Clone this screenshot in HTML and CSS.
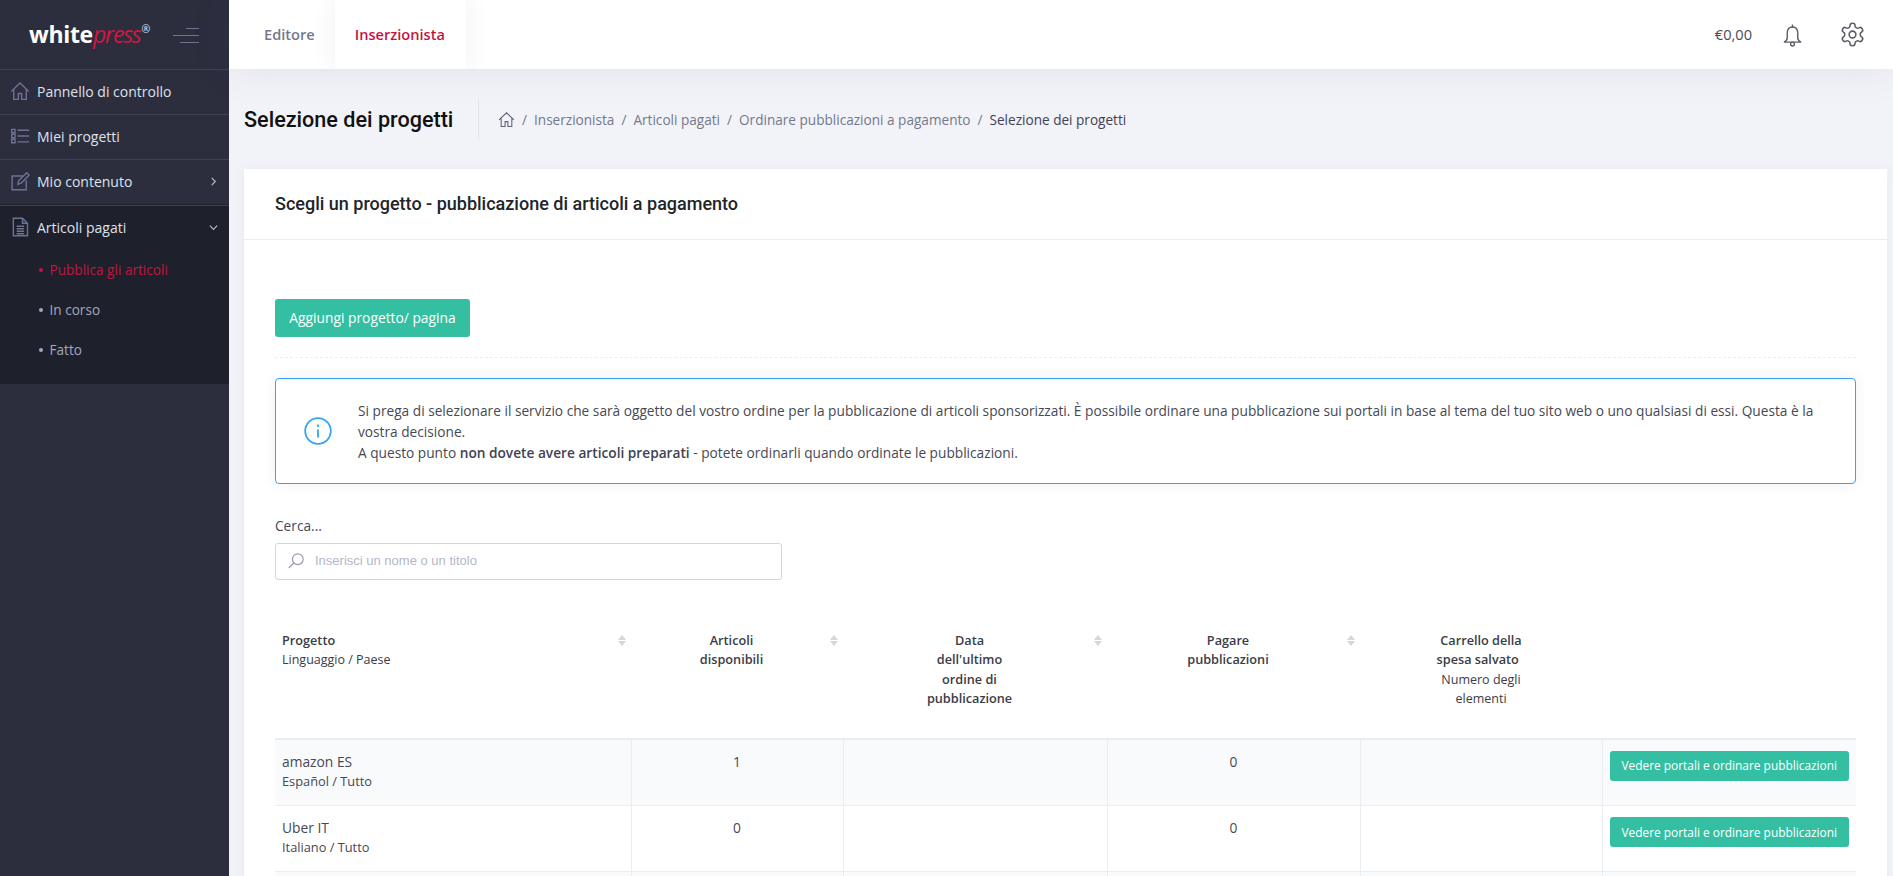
FILE: index.html
```html
<!DOCTYPE html>
<html lang="it">
<head>
<meta charset="utf-8">
<title>Selezione dei progetti</title>
<link rel="stylesheet" href="styles.css">
</head>
<body>
<div class="app">
  <aside class="sidebar">
    <div class="brand">
      <div class="logo"><span class="logo-white">white</span><span class="logo-press">press</span><span class="logo-reg">®</span></div>
      <div class="toggler"><i class="t1"></i><i class="t2"></i><i class="t3"></i></div>
    </div>
    <nav class="menu">
      <a class="item">
        <svg class="mi" viewBox="0 0 24 24"><path d="M1.500 12.500 12 2.500l10.500 10M4.500 10.500V22h5.500v-7h4v7h5.500V10.500"/></svg>
        <span class="label">Pannello di controllo</span>
      </a>
      <a class="item">
        <svg class="mi" viewBox="0 0 24 24"><path d="M2 4h4v4H2zM2 10h4v4H2zM2 16h4v4H2zM9 5h14M9 12h14M9 19h14"/></svg>
        <span class="label">Miei progetti</span>
      </a>
      <a class="item">
        <svg class="mi" viewBox="0 0 24 24"><path d="M15 6H2.500v16.500h17V11M9.500 16l1-4.500L20 2l3 3-9.500 9.500z"/></svg>
        <span class="label">Mio contenuto</span>
        <svg class="chev" viewBox="0 0 10 10"><path d="M3 1l4 4-4 4"/></svg>
      </a>
      <div class="group">
        <a class="item item-open">
          <svg class="mi" viewBox="0 0 24 24"><path d="M4 1.500h11l6 6v15H4zM15 1.500v6h6M8 11h9M8 14h9M8 17h9M8 20h9"/></svg>
          <span class="label">Articoli pagati</span>
          <svg class="chev" viewBox="0 0 10 10"><path d="M1 3l4 4 4-4"/></svg>
        </a>
        <a class="sub sub-active"><span class="dot"></span>Pubblica gli articoli</a>
        <a class="sub"><span class="dot"></span>In corso</a>
        <a class="sub"><span class="dot"></span>Fatto</a>
      </div>
    </nav>
  </aside>

  <div class="main">
    <header class="topbar">
      <nav class="tabs">
        <a class="tab">Editore</a>
        <a class="tab tab-active">Inserzionista</a>
      </nav>
      <div class="tools">
        <span class="balance">€0,00</span>
        <svg class="bell" viewBox="0 0 20 24"><path d="M10 1v2.500M10 3.500c-3.800 0-5.500 3-5.500 6.500v5c0 2.200-1 3.500-3.500 4.500h18c-2.500-1-3.500-2.300-3.500-4.500v-5c0-3.500-1.700-6.500-5.500-6.500z"/><circle cx="10" cy="21.500" r="2"/></svg>
        <svg class="gear" viewBox="0 0 24 24"><path d="M12.220 2h-.44a2 2 0 0 0-2 2v.18a2 2 0 0 1-1 1.730l-.43.250a2 2 0 0 1-2 0l-.15-.08a2 2 0 0 0-2.730.730l-.22.380a2 2 0 0 0 .73 2.730l.15.100a2 2 0 0 1 1 1.720v.51a2 2 0 0 1-1 1.740l-.15.090a2 2 0 0 0-.73 2.730l.22.380a2 2 0 0 0 2.730.730l.15-.08a2 2 0 0 1 2 0l.43.250a2 2 0 0 1 1 1.730V20a2 2 0 0 0 2 2h.44a2 2 0 0 0 2-2v-.18a2 2 0 0 1 1-1.730l.43-.25a2 2 0 0 1 2 0l.15.080a2 2 0 0 0 2.730-.73l.22-.39a2 2 0 0 0-.73-2.730l-.15-.08a2 2 0 0 1-1-1.740v-.5a2 2 0 0 1 1-1.740l.15-.09a2 2 0 0 0 .73-2.730l-.22-.38a2 2 0 0 0-2.730-.73l-.15.080a2 2 0 0 1-2 0l-.43-.25a2 2 0 0 1-1-1.730V4a2 2 0 0 0-2-2z"/><circle cx="12" cy="12" r="3"/></svg>
      </div>
    </header>

    <div class="subheader">
      <h1 class="page-title">Selezione dei progetti</h1>
      <div class="crumbs">
        <svg class="crumb-home" viewBox="0 0 24 24"><path d="M1.500 12.500 12 2.500l10.500 10M4.500 10.500V22h5.500v-7h4v7h5.500V10.500"/></svg>
        <span class="sep">/</span><a>Inserzionista</a>
        <span class="sep">/</span><a>Articoli pagati</a>
        <span class="sep">/</span><a>Ordinare pubblicazioni a pagamento</a>
        <span class="sep">/</span><a class="crumb-last">Selezione dei progetti</a>
      </div>
    </div>

    <section class="card">
      <div class="card-head"><h2 class="card-title">Scegli un progetto - pubblicazione di articoli a pagamento</h2></div>
      <div class="card-body">
        <div class="actions"><a class="btn btn-add">Aggiungi progetto/ pagina</a></div>

        <div class="alert">
          <svg class="alert-icon" viewBox="0 0 28 28"><circle cx="14" cy="14" r="12.800"/><path d="M14 12.500V20.500M14 7.500v2.400"/></svg>
          <p class="alert-text">Si prega di selezionare il servizio che sarà oggetto del vostro ordine per la pubblicazione di articoli sponsorizzati. È possibile ordinare una pubblicazione sui portali in base al tema del tuo sito web o uno qualsiasi di essi. Questa è la vostra decisione.<br>A questo punto <b>non dovete avere articoli preparati</b> - potete ordinarli quando ordinate le pubblicazioni.</p>
        </div>

        <label class="search-label" for="q">Cerca...</label>
        <div class="search">
          <svg class="search-icon" viewBox="0 0 16 16"><circle cx="9.800" cy="6.200" r="5.400"/><path d="M5.800 10 .8 15"/></svg>
          <input id="q" class="search-input" type="text" placeholder="Inserisci un nome o un titolo">
        </div>

        <table class="grid">
          <colgroup>
            <col class="c1"><col class="c2"><col class="c3"><col class="c4"><col class="c5"><col class="c6">
          </colgroup>
          <thead>
            <tr>
              <th class="left">Progetto<br><span class="th-sub">Linguaggio / Paese</span><span class="sort"></span></th>
              <th>Articoli<br>disponibili<span class="sort"></span></th>
              <th>Data<br>dell'ultimo<br>ordine di<br>pubblicazione<span class="sort"></span></th>
              <th>Pagare<br>pubblicazioni<span class="sort"></span></th>
              <th class="nosort">Carrello della<br>spesa salvato&nbsp;&nbsp;<br><span class="th-sub">Numero degli<br>elementi</span></th>
              <th class="nosort"></th>
            </tr>
          </thead>
          <tbody>
            <tr class="odd first">
              <td class="left"><div class="name">amazon ES</div><div class="meta">Español / Tutto</div></td>
              <td>1</td><td></td><td>0</td><td></td>
              <td class="cell-btn"><a class="btn btn-row">Vedere portali e ordinare pubblicazioni</a></td>
            </tr>
            <tr>
              <td class="left"><div class="name">Uber IT</div><div class="meta">Italiano / Tutto</div></td>
              <td>0</td><td></td><td>0</td><td></td>
              <td class="cell-btn"><a class="btn btn-row">Vedere portali e ordinare pubblicazioni</a></td>
            </tr>
            <tr class="odd">
              <td class="left"></td><td></td><td></td><td></td><td></td><td class="cell-btn"></td>
            </tr>
          </tbody>
        </table>
      </div>
    </section>
  </div>
</div>
</body>
</html>
```

FILE: styles.css
```css
* { box-sizing: border-box; }
html, body { margin: 0; height: 100%; overflow: hidden; }
body {
  font-family: "Open Sans", "Liberation Sans", sans-serif;
  font-size: 13.700px;
  line-height: 1.5;
  color: #464953;
  background: #f2f3f8;
}
a { text-decoration: none; }

.app { display: flex; height: 876px; overflow: hidden; }

/* Sidebar */
.sidebar { flex: 0 0 229px; background: #2c2e3e; }
.brand { height: 69px; display: flex; align-items: center; padding: 0 30px 0 29px; justify-content: space-between; }
.logo { display: flex; align-items: flex-start; line-height: 26px; height: 26px; margin-top: -2px; }
.logo-white { font-size: 23px; font-weight: 700; color: #fff; letter-spacing: -.3px; }
.logo-press { font-size: 23px; font-weight: 400; font-style: italic; color: #d0173f; letter-spacing: -1.200px; }
.logo-reg { font-size: 10.500px; line-height: 12px; color: #e6e7ef; margin: 2px 0 0 1px; }
.toggler { display: flex; flex-direction: column; align-items: flex-end; gap: 6px; margin-top: 1px; }
.toggler i { display: block; height: 1px; background: #6f7396; }
.t1 { width: 13px; }
.t2 { width: 26px; }
.t3 { width: 19px; }

.item { display: flex; align-items: center; height: 45px; padding: 0 11px 2px 10px; border-top: 1px solid #3f4154; }
.mi { width: 20px; height: 20px; fill: none; stroke: #6c7293; stroke-width: 1.700; margin-right: 7px; flex: none; }
.label { flex: 1; font-size: 14px; color: #dfe1ec; }
.chev { width: 9px; height: 9px; fill: none; stroke: #b9bccb; stroke-width: 1.300; flex: none; }
.group { background: #1e202c; padding: 1px 0 14px; }
.sub { display: flex; align-items: center; height: 40px; padding-left: 39px; font-size: 13.600px; color: #a2a6bd; }
.sub-active { color: #c0163f; }
.dot { width: 4px; height: 4px; border-radius: 50%; background: #a2a6bd; margin-right: 6.500px; }
.sub-active .dot { background: #c0163f; }

/* Main */
.main { flex: 1; min-width: 0; display: flex; flex-direction: column; }
.topbar {
  flex: 0 0 69px;
  background: #fff;
  display: flex;
  align-items: stretch;
  justify-content: space-between;
  box-shadow: 0 0 40px rgba(82, 63, 105, .1);
  position: relative;
  padding-right: 29px;
}
.tabs { display: flex; padding-left: 15px; clip-path: inset(0 -40px 0 0); }
.tab { display: flex; align-items: center; padding: 0 20px; font-size: 14.600px; font-weight: 600; color: #74788d; }
.tab-active { width: 131px; background: #fff; color: #c3143f; box-shadow: 0 0 25px rgba(82, 63, 105, .08); }
.tools { display: flex; align-items: center; }
.balance { font-size: 14.600px; font-weight: 500; color: #464b58; margin-right: 31px; }
.bell { width: 19px; height: 24px; fill: none; stroke: #5c5e68; stroke-width: 1.500; margin-right: 37px; }
.gear { width: 27px; height: 27px; fill: none; stroke: #5c5e68; stroke-width: 1.400; margin-right: -2px; }

.subheader { flex: none; display: flex; align-items: center; padding: 30px 0 30px 15px; height: 100px; }
.page-title { margin: 0; width: 235px; padding-top: 2px; font-family: Roboto, "Liberation Sans", sans-serif; font-size: 21.600px; font-weight: 500; line-height: 38px; white-space: nowrap; color: #111; border-right: 1px solid #e2e5ec; }
.crumbs { display: flex; align-items: center; padding: 2px 0 0 19px; font-size: 13.600px; color: #74788d; }
.crumb-home { width: 17px; height: 17px; fill: none; stroke: #5e6278; stroke-width: 1.500; }
.sep { margin: 0 7px; }
.crumb-last { color: #3f4254; }

.card { flex: 1; margin: 0 6px 0 15px; background: #fff; box-shadow: 0 0 13px rgba(82, 63, 105, .05); }
.card-head { height: 71px; border-bottom: 1px solid #ebedf2; padding: 0 0 2px 31px; display: flex; align-items: center; }
.card-title { margin: 0; font-family: Roboto, "Liberation Sans", sans-serif; font-size: 18px; font-weight: 500; color: #212529; }
.card-body { padding: 59px 31px 0; }
.actions { padding-bottom: 20px; border-bottom: 1px dashed #ebedf2; height: 59px; }
.btn { display: inline-flex; align-items: center; justify-content: center; background: #34bfa3; color: #fff; border-radius: 3px; }
.btn-add { width: 195px; height: 38px; padding-top: 1px; font-size: 13.800px; }

.alert {
  margin-top: 20px;
  height: 106px;
  border: 1px solid #36a3f7;
  border-radius: 4px;
  box-shadow: 0 0 13px rgba(82, 63, 105, .08);
  display: flex;
  align-items: center;
  padding: 0 24px 0 28px;
}
.alert-icon { width: 28px; height: 28px; flex: none; fill: none; stroke: #36a3f7; stroke-width: 1.800; margin-right: 26px; }
.alert-text { margin: 0; line-height: 21px; }
.alert-text b { font-weight: 600; color: #3f4254; }

.search-label { display: block; margin-top: 32px; line-height: 19.500px; }
.search { position: relative; margin-top: 7px; width: 507px; }
.search-icon { position: absolute; left: 13px; top: 10px; width: 16px; height: 16px; fill: none; stroke: #9a9cb3; stroke-width: 1.200; }
.search-input {
  display: block;
  width: 100%;
  height: 37px;
  border: 1px solid #d3d5e3;
  border-radius: 3px;
  padding: 0 12px 2px 39px;
  font-family: "Liberation Sans", Arial, sans-serif;
  font-size: 13px;
  outline: none;
  background: #fff;
}
.search-input::placeholder { color: #b5b6c8; opacity: 1; }

.grid { margin-top: 35px; width: 1581px; table-layout: fixed; border-collapse: collapse; }
.c1 { width: 356px; }
.c2 { width: 212px; }
.c3 { width: 264px; }
.c4 { width: 253px; }
.c5 { width: 242px; }
.c6 { width: 254px; }
.grid th {
  position: relative;
  height: 124px;
  vertical-align: top;
  padding: 16px 18px 0 7px;
  font-size: 12.700px;
  font-weight: 600;
  line-height: 19.500px;
  text-align: center;
  color: #3a3c46;
  border-bottom: 2px solid #ebedf2;
}
.grid th.nosort { padding-right: 7px; }
.grid th.left, .grid td.left { text-align: left; }
.th-sub { font-size: 12.500px; font-weight: 400; }
.sort { position: absolute; right: 5px; top: 20px; width: 8px; height: 11px; }
.sort::before, .sort::after { content: ""; position: absolute; left: 0; border-left: 4px solid transparent; border-right: 4px solid transparent; }
.sort::before { top: 0; border-bottom: 5px solid #d4d6e2; }
.sort::after { bottom: 0; border-top: 5px solid #d4d6e2; }

.grid td {
  height: 66px;
  vertical-align: top;
  padding: 11px 7px 0;
  font-size: 13.800px;
  line-height: 21px;
  text-align: center;
  border: 1px solid #ebedf2;
}
.grid td:first-child { border-left: 0; }
.grid td:last-child { border-right: 0; }
.grid .first td { border-top: 0; height: 67px; }
.odd td { background: #f9fafc; }
.name { font-size: 13.800px; line-height: 21px; }
.meta { font-size: 12.800px; line-height: 18px; }
.grid .cell-btn { padding: 11px 7px 0; }
.btn-row { width: 239px; height: 30px; font-size: 11.900px; font-weight: 500; white-space: nowrap; }
```
